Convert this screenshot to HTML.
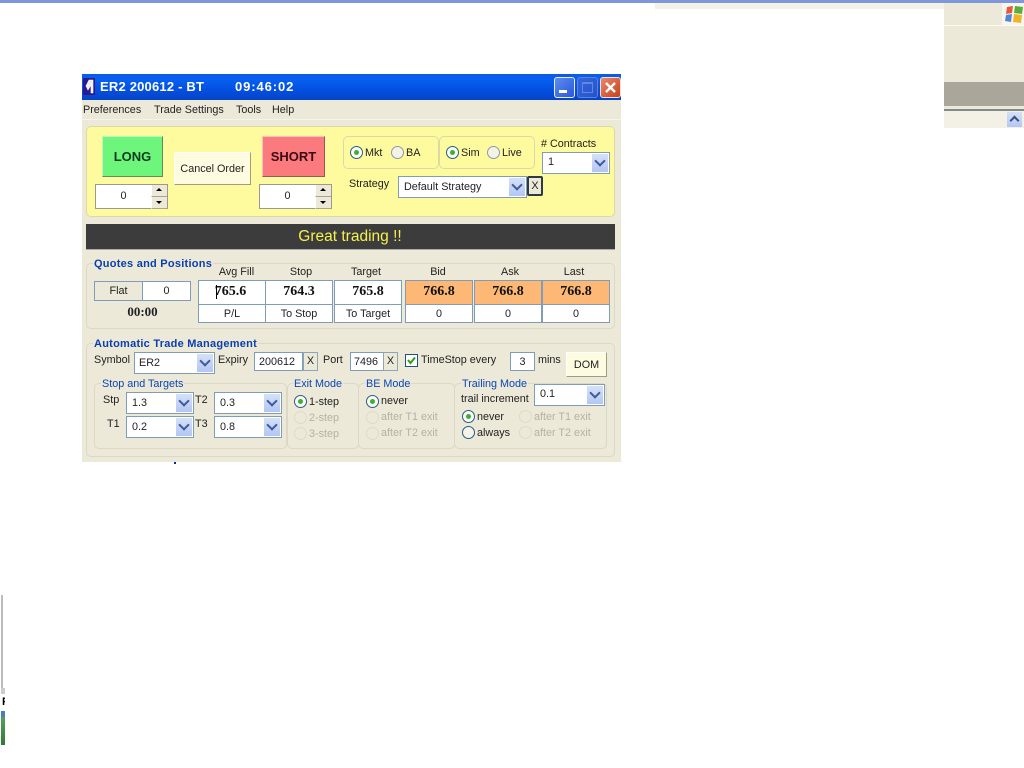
<!DOCTYPE html>
<html><head><meta charset="utf-8"><title>ER2</title>
<style>
html,body{margin:0;padding:0;background:#fff;width:1024px;height:768px;overflow:hidden}
body{position:relative;font-family:"Liberation Sans",sans-serif;font-size:10.8px;color:#222}
div,span{position:absolute;box-sizing:border-box}
.t{white-space:nowrap;line-height:14px;margin-top:1px}
.c{text-align:center}
.grp{border:1px solid #dbd8c6;border-radius:5px}
.ttl{color:#0a46b4;background:#ece9d8;padding:0 1px;line-height:12px;white-space:nowrap;margin-top:1px;margin-left:-1px}
.b{font-weight:bold;color:#0a3fae;font-size:11px;letter-spacing:.25px}
.box{background:#fff;border:1px solid #7f9db9;line-height:18px;white-space:nowrap}
.arr{position:absolute;right:1px;top:1px;bottom:1px;width:16px;background:linear-gradient(#d6e1f8,#b3c6f2)}
.arr:after{content:"";position:absolute;left:4px;top:50%;margin-top:-6px;width:8px;height:8px;border-right:2px solid #3c5a9c;border-bottom:2px solid #3c5a9c;transform:rotate(45deg);box-sizing:border-box}
.r{width:13px;height:13px;border-radius:50%;background:#fbfbf6;border:1px solid #2d5a80}
.r.on:after{content:"";position:absolute;left:3px;top:3px;width:5px;height:5px;border-radius:50%;background:#3cae3c}
.r.off{border-color:#8c9aa4;background:#f4f3e8}
.r.dis{border-color:#dedbc9;background:#ece9d8}
.dis-t{color:#b4b2a3}
.cell{background:#fff;border:1px solid #7f9db9;text-align:center;white-space:nowrap}
.v{font:bold 14px/22px "Liberation Serif",serif;color:#111}
.o{background:#fdb876}
.xbtn{background:#ece9d8;border:1px solid #8ea4bc;text-align:center;line-height:17px}
.spinb{background:#ece9d8;width:16px;height:12px;border-left:1px solid #fff;border-bottom:1px solid #a8a590}
.up:after,.dn:after{content:"";position:absolute;left:4px;width:0;height:0;border-left:3px solid transparent;border-right:3px solid transparent}
.up:after{top:3px;border-bottom:3px solid #000}
.dn:after{top:4px;border-top:3px solid #000}
</style></head><body>

<!-- top strip -->
<div style="left:0;top:0;width:1024px;height:3px;background:#8096da"></div>
<div style="left:655px;top:3px;width:369px;height:6px;background:#f5f1e4"></div>
<div style="left:944px;top:3px;width:80px;height:125px;background:#ece9d8"></div>
<div style="left:944px;top:25px;width:80px;height:1px;background:#fbfaf3"></div>
<div style="left:1002px;top:3px;width:22px;height:22px;background:#f8f7ef"></div>
<svg style="position:absolute;left:1004px;top:4px" width="20" height="20" viewBox="0 0 20 20"><path d="M3 3 L9 2 L8 9 L2 10Z" fill="#e8583a"/><path d="M11 2 L19 3 L18 10 L10 9Z" fill="#5cae3c"/><path d="M2 11 L8 10 L7 18 L1 17Z" fill="#4f86d8"/><path d="M10 10 L18 11 L17 19 L9 18Z" fill="#f0b428"/></svg>
<div style="left:944px;top:82px;width:80px;height:24px;background:#aaa79a"></div>
<div style="left:944px;top:109px;width:80px;height:2px;background:#7f8c8c"></div>
<div style="left:944px;top:111px;width:80px;height:17px;background:#f3f1e6"></div>
<div style="left:1007px;top:112px;width:15px;height:15px;background:linear-gradient(#d6e1f8,#b3c6f2)"></div>
<div style="left:1011px;top:117px;width:7px;height:7px;border-left:2px solid #35527f;border-top:2px solid #35527f;transform:rotate(45deg)"></div>

<!-- bottom left fragments -->
<div style="left:1px;top:595px;width:2px;height:93px;background:#bbb"></div>
<div style="left:1px;top:688px;width:4px;height:6px;background:#ccc"></div>
<div class="t" style="left:2px;top:694px;font-size:11px;color:#000;width:3px;overflow:hidden;font-weight:bold">F</div>
<div style="left:1px;top:711px;width:4px;height:6px;background:#4a7cc0"></div>
<div style="left:1px;top:717px;width:4px;height:28px;background:linear-gradient(#58a058,#2f7a3a)"></div>

<div style="left:174px;top:462px;width:2px;height:2px;background:#0a2a9a"></div>

<!-- window -->
<div style="left:82px;top:74px;width:539px;height:388px;background:#ece9d8"></div>
<div style="left:82px;top:74px;width:539px;height:26px;background:linear-gradient(#0a5ae6 0,#0860f0 20%,#0350e0 60%,#0444c8 100%)"></div>
<div style="left:83px;top:78px;width:12px;height:17px;background:#2a1a90"></div>
<svg style="position:absolute;left:83px;top:78px" width="12" height="17" viewBox="0 0 12 17"><path d="M6 2 L10 2 L10 15 L8 15 L8 7 L5 12 L3 8 Z" fill="#eee" stroke="#fff" stroke-width=".6"/></svg>
<div class="t" style="left:100px;top:78px;color:#fff;font-weight:bold;font-size:13px;line-height:16px;letter-spacing:.2px">ER2 200612 - BT</div>
<div class="t" style="left:235px;top:78px;color:#fff;font-weight:bold;font-size:13px;line-height:16px;letter-spacing:.9px">09:46:02</div>
<div style="left:554px;top:77px;width:21px;height:21px;border:1px solid #e8eefc;border-radius:3px;background:linear-gradient(135deg,#5c8cf0,#2a58d8)"></div>
<div style="left:559px;top:90px;width:8px;height:3px;background:#fff"></div>
<div style="left:577px;top:77px;width:21px;height:21px;border:1px solid #5c80e0;border-radius:3px;background:linear-gradient(135deg,#3566dc,#2652c8)"></div>
<div style="left:582px;top:82px;width:11px;height:11px;border:1px solid #6088e0;border-top-width:2px"></div>
<div style="left:600px;top:77px;width:21px;height:21px;border:1px solid #f0e0dc;border-radius:3px;background:linear-gradient(135deg,#e88a68,#c8401c)"></div>
<svg style="position:absolute;left:600px;top:77px" width="21" height="21"><path d="M6 6 L15 15 M15 6 L6 15" stroke="#fff" stroke-width="2.4"/></svg>

<!-- menu -->
<div class="t" style="left:83px;top:102px">Preferences</div>
<div class="t" style="left:154px;top:102px">Trade Settings</div>
<div class="t" style="left:236px;top:102px">Tools</div>
<div class="t" style="left:272px;top:102px">Help</div>
<div style="left:82px;top:119px;width:539px;height:1px;background:#f6f4ea"></div>

<!-- yellow panel -->
<div style="left:86px;top:126px;width:529px;height:91px;background:#fdfb9e;border:1px solid #dcd9a8;border-radius:5px"></div>
<div class="c t" style="left:102px;top:136px;width:61px;height:41px;margin:0;background:#6ef57c;border:1px solid;border-color:#b8f8bc #5c8c60 #5c8c60 #b8f8bc;font:bold 13px/39px 'Liberation Sans',sans-serif;color:#0c3c20">LONG</div>
<div class="c t" style="left:174px;top:152px;width:77px;height:33px;margin:0;background:#fdfbe0;border:1px solid;border-color:#fff #a09c84 #a09c84 #fff;line-height:32px">Cancel Order</div>
<div class="c t" style="left:262px;top:136px;width:63px;height:41px;margin:0;background:#fb7a7e;border:1px solid;border-color:#fcc0c0 #8c5c5c #8c5c5c #fcc0c0;font:bold 13px/39px 'Liberation Sans',sans-serif;color:#3c0c14">SHORT</div>

<div class="box c" style="left:95px;top:184px;width:73px;height:25px;line-height:22px;padding-right:16px;border-color:#9a9a90">0</div>
<div class="spinb up" style="left:151px;top:185px"></div><div class="spinb dn" style="left:151px;top:197px"></div>
<div class="box c" style="left:259px;top:184px;width:73px;height:25px;line-height:22px;padding-right:16px;border-color:#9a9a90">0</div>
<div class="spinb up" style="left:315px;top:185px"></div><div class="spinb dn" style="left:315px;top:197px"></div>

<div style="left:343px;top:136px;width:96px;height:33px;border:1px solid #dcd9a8;border-radius:5px"></div>
<div style="left:439px;top:136px;width:96px;height:33px;border:1px solid #dcd9a8;border-radius:5px"></div>
<div class="r on" style="left:350px;top:146px"></div><div class="t" style="left:365px;top:145px">Mkt</div>
<div class="r off" style="left:391px;top:146px"></div><div class="t" style="left:406px;top:145px">BA</div>
<div class="r on" style="left:446px;top:146px"></div><div class="t" style="left:461px;top:145px">Sim</div>
<div class="r off" style="left:487px;top:146px"></div><div class="t" style="left:502px;top:145px">Live</div>
<div class="t" style="left:541px;top:136px"># Contracts</div>
<div class="box" style="left:542px;top:152px;width:68px;height:22px;padding-left:5px;line-height:19px">1<span class="arr"></span></div>
<div class="t" style="left:349px;top:176px">Strategy</div>
<div class="box" style="left:398px;top:176px;width:129px;height:22px;padding-left:5px;line-height:20px">Default Strategy<span class="arr"></span></div>
<div class="c" style="left:527px;top:176px;width:16px;height:20px;background:#ece9d8;border:2px solid #303a44;border-radius:2px;line-height:16px">X</div>

<!-- message -->
<div class="c t" style="left:86px;top:224px;width:529px;height:26px;margin:0;background:#3c3c3c;border-bottom:1px solid #aaa;color:#f6f050;font-size:15.5px;line-height:26px;padding-right:1px">Great trading !!</div>

<!-- quotes -->
<div class="grp" style="left:86px;top:263px;width:529px;height:66px"></div>
<div class="ttl b" style="left:94px;top:257px">Quotes and Positions</div>
<div class="c" style="left:94px;top:281px;width:49px;height:20px;background:#ece9d8;border:1px solid #7f9db9;line-height:18px">Flat</div>
<div class="cell" style="left:142px;top:281px;width:49px;height:20px;line-height:18px">0</div>
<div class="c t" style="left:94px;top:303px;width:97px;font:bold 13px/15px 'Liberation Serif',serif">00:00</div>

<div class="t c" style="left:198px;top:264px;width:77px">Avg Fill</div>
<div class="t c" style="left:265px;top:264px;width:72px">Stop</div>
<div class="t c" style="left:334px;top:264px;width:64px">Target</div>
<div class="t c" style="left:405px;top:264px;width:66px">Bid</div>
<div class="t c" style="left:474px;top:264px;width:72px">Ask</div>
<div class="t c" style="left:542px;top:264px;width:64px">Last</div>

<div class="cell v" style="left:198px;top:280px;width:68px;height:25px;padding-right:3px">765.6</div>
<div style="left:216px;top:285px;width:1px;height:14px;background:#000"></div>
<div class="cell v" style="left:265px;top:280px;width:68px;height:25px">764.3</div>
<div class="cell v" style="left:334px;top:280px;width:68px;height:25px">765.8</div>
<div class="cell v o" style="left:405px;top:280px;width:68px;height:25px">766.8</div>
<div class="cell v o" style="left:474px;top:280px;width:68px;height:25px">766.8</div>
<div class="cell v o" style="left:542px;top:280px;width:68px;height:25px">766.8</div>
<div class="cell" style="left:198px;top:304px;width:68px;height:19px;line-height:18px">P/L</div>
<div class="cell" style="left:265px;top:304px;width:68px;height:19px;line-height:18px">To Stop</div>
<div class="cell" style="left:334px;top:304px;width:68px;height:19px;line-height:18px">To Target</div>
<div class="cell" style="left:405px;top:304px;width:68px;height:19px;line-height:18px">0</div>
<div class="cell" style="left:474px;top:304px;width:68px;height:19px;line-height:18px">0</div>
<div class="cell" style="left:542px;top:304px;width:68px;height:19px;line-height:18px">0</div>

<!-- auto -->
<div class="grp" style="left:86px;top:343px;width:529px;height:114px"></div>
<div class="ttl b" style="left:94px;top:337px">Automatic Trade Management</div>
<div class="t" style="left:94px;top:352px">Symbol</div>
<div class="box" style="left:134px;top:352px;width:81px;height:22px;padding-left:4px;line-height:20px">ER2<span class="arr"></span></div>
<div class="t" style="left:218px;top:352px">Expiry</div>
<div class="box" style="left:254px;top:352px;width:49px;height:19px;padding-left:4px;line-height:18px">200612</div>
<div class="xbtn" style="left:303px;top:352px;width:15px;height:19px">X</div>
<div class="t" style="left:323px;top:352px">Port</div>
<div class="box" style="left:350px;top:352px;width:34px;height:19px;padding-left:3px;line-height:18px">7496</div>
<div class="xbtn" style="left:383px;top:352px;width:15px;height:19px">X</div>
<div style="left:405px;top:354px;width:13px;height:13px;background:#fff;border:1px solid #1c5180"></div>
<svg style="position:absolute;left:405px;top:354px" width="13" height="13"><path d="M3 6 L5.5 9 L10 3.5" stroke="#28a028" stroke-width="2" fill="none"/></svg>
<div class="t" style="left:421px;top:352px">TimeStop every</div>
<div class="box c" style="left:510px;top:352px;width:25px;height:19px">3</div>
<div class="t" style="left:538px;top:352px">mins</div>
<div class="c" style="left:566px;top:352px;width:41px;height:25px;background:#fdfbe0;border:1px solid;border-color:#fff #a09c84 #a09c84 #fff;line-height:24px">DOM</div>

<div class="grp" style="left:94px;top:383px;width:193px;height:66px"></div>
<div class="ttl" style="left:102px;top:377px">Stop and Targets</div>
<div class="grp" style="left:287px;top:383px;width:72px;height:66px"></div>
<div class="ttl" style="left:294px;top:377px">Exit Mode</div>
<div class="grp" style="left:358px;top:383px;width:97px;height:66px"></div>
<div class="ttl" style="left:366px;top:377px">BE Mode</div>
<div class="grp" style="left:454px;top:383px;width:153px;height:66px"></div>
<div class="ttl" style="left:462px;top:377px">Trailing Mode</div>

<div class="t" style="left:103px;top:392px">Stp</div>
<div class="t" style="left:107px;top:416px">T1</div>
<div class="t" style="left:195px;top:392px">T2</div>
<div class="t" style="left:195px;top:416px">T3</div>
<div class="box" style="left:126px;top:392px;width:68px;height:22px;padding-left:5px;line-height:20px">1.3<span class="arr"></span></div>
<div class="box" style="left:126px;top:416px;width:68px;height:22px;padding-left:5px;line-height:20px">0.2<span class="arr"></span></div>
<div class="box" style="left:214px;top:392px;width:68px;height:22px;padding-left:5px;line-height:20px">0.3<span class="arr"></span></div>
<div class="box" style="left:214px;top:416px;width:68px;height:22px;padding-left:5px;line-height:20px">0.8<span class="arr"></span></div>

<div class="r on" style="left:294px;top:395px"></div><div class="t" style="left:309px;top:394px">1-step</div>
<div class="r dis" style="left:294px;top:411px"></div><div class="t dis-t" style="left:309px;top:410px">2-step</div>
<div class="r dis" style="left:294px;top:427px"></div><div class="t dis-t" style="left:309px;top:426px">3-step</div>

<div class="r on" style="left:366px;top:395px"></div><div class="t" style="left:381px;top:393px">never</div>
<div class="r dis" style="left:366px;top:411px"></div><div class="t dis-t" style="left:381px;top:409px">after T1 exit</div>
<div class="r dis" style="left:366px;top:427px"></div><div class="t dis-t" style="left:381px;top:425px">after T2 exit</div>

<div class="t" style="left:461px;top:391px">trail increment</div>
<div class="box" style="left:534px;top:384px;width:71px;height:22px;padding-left:5px;line-height:18px">0.1<span class="arr"></span></div>
<div class="r on" style="left:462px;top:410px"></div><div class="t" style="left:477px;top:409px">never</div>
<div class="r off" style="left:462px;top:426px;border-color:#2d5a80"></div><div class="t" style="left:477px;top:425px">always</div>
<div class="r dis" style="left:519px;top:410px"></div><div class="t dis-t" style="left:534px;top:409px">after T1 exit</div>
<div class="r dis" style="left:519px;top:426px"></div><div class="t dis-t" style="left:534px;top:425px">after T2 exit</div>

</body></html>
